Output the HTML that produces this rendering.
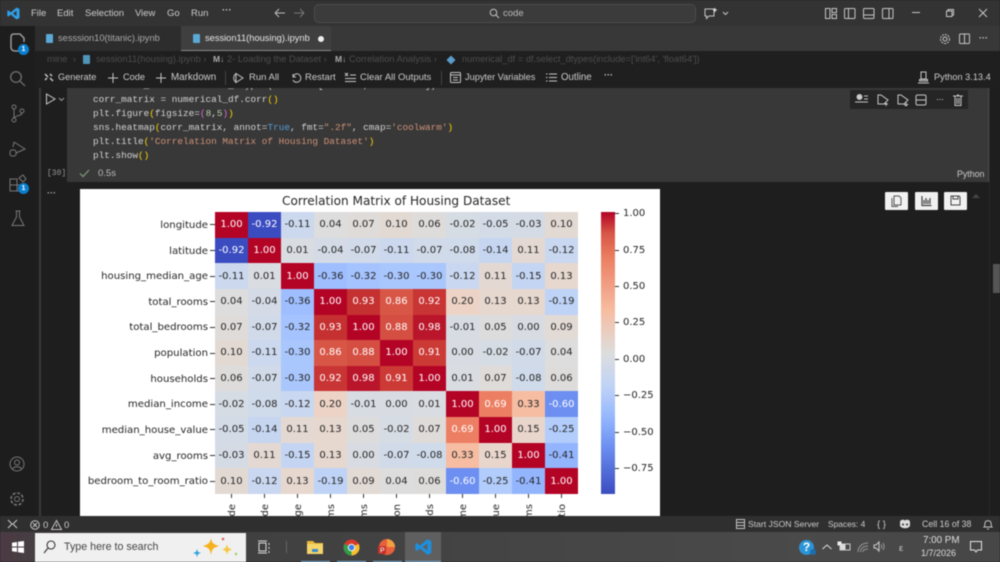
<!DOCTYPE html>
<html><head><meta charset="utf-8"><style>
html,body{margin:0;padding:0;background:#1e1e1e;width:1000px;height:562px;overflow:hidden}
#p{position:relative;width:1000px;height:562px;overflow:hidden;background:#1e1e1e;font-family:"Liberation Sans",sans-serif;color:#ccc;filter:blur(.45px)}
.a{position:absolute}
.t{position:absolute;white-space:nowrap;line-height:1;font-size:9.5px}
svg{position:absolute;overflow:visible}
svg.s *{fill:none;stroke:#c5c5c5;stroke-width:1}
.code{position:absolute;left:93px;font:9.4px/1 "Liberation Mono",monospace;color:#d4d4d4;white-space:pre}
.y{color:#ffd700}.m{color:#da70d6}.u{color:#569cd6}.o{color:#ce9178}.n{color:#b5cea8}
#g{position:absolute;left:135px;top:23px;width:363px;height:282px;display:grid;grid-template-columns:repeat(11,33px);grid-template-rows:repeat(11,1fr);font:10px/1 "DejaVu Sans",sans-serif;color:#262626}
#g i{font-style:normal;display:flex;align-items:center;justify-content:center;padding-top:1px;box-sizing:border-box}
#g i.w{color:#fff}
.yl{position:absolute;right:452px;font:10.15px/1 "DejaVu Sans",sans-serif;color:#262626;white-space:nowrap}
.yt{position:absolute;left:130px;width:5px;height:1px;background:#333}
.xt{position:absolute;top:305px;width:1px;height:4px;background:#333}
.xl{font:10px "DejaVu Sans",sans-serif;fill:#262626}
.ct{position:absolute;left:535px;width:4px;height:1px;background:#333}
.cl{position:absolute;left:543px;font:10px/1 "DejaVu Sans",sans-serif;color:#262626;white-space:nowrap}
.btn{position:absolute;top:192px;width:23px;height:18px;background:#f1f1f1;border-radius:1px}
</style></head><body><div id="p">

<!-- title bar -->
<div class="a" style="left:0;top:0;width:1000px;height:26px;background:#333"></div>
<svg style="left:7px;top:7px" width="13" height="13" viewBox="0 0 13 13"><path d="M9.5 0.5 L12.5 2 V11 L9.5 12.5 L3.8 7.6 L1.3 9.6 L0.3 9 V4 L1.3 3.4 L3.8 5.4 Z M9.5 3.8 L6 6.5 L9.5 9.2 Z" fill="#2f9fe6" fill-rule="evenodd"/></svg>
<div class="t" style="left:31px;top:8.5px;color:#ccc">File</div>
<div class="t" style="left:57px;top:8.5px">Edit</div>
<div class="t" style="left:85px;top:8.5px">Selection</div>
<div class="t" style="left:135px;top:8.5px">View</div>
<div class="t" style="left:167px;top:8.5px">Go</div>
<div class="t" style="left:191px;top:8.5px">Run</div>
<div class="t" style="left:222px;top:6px;font-weight:bold">···</div>
<svg class="s" style="left:274px;top:8px" width="12" height="10"><path d="M1 5H11M1 5L5 1M1 5L5 9" style="stroke:#bbb"/></svg>
<svg class="s" style="left:293px;top:8px" width="12" height="10"><path d="M1 5H11M11 5L7 1M11 5L7 9" style="stroke:#777"/></svg>
<div class="a" style="left:314px;top:4px;width:380px;height:17px;background:#3b3b3b;border:1px solid #4c4c4c;border-radius:5px"></div>
<svg class="s" style="left:489px;top:8px" width="11" height="11"><circle cx="4.5" cy="4.5" r="3.3"/><path d="M7 7L10 10"/></svg>
<div class="t" style="left:503px;top:8.5px;color:#bbb">code</div>
<svg class="s" style="left:704px;top:7px" width="24" height="13"><path d="M1 2H10V9H5L2.5 11.5V9H1Z"/><path d="M11 1V5M9 3H13" style="stroke:#ddd"/><path d="M19 5L21.5 7.5L24 5"/></svg>
<svg class="s" style="left:825px;top:8px" width="12" height="11"><path d="M.5 .5H5V10.5H.5ZM7 .5H11.5V4.5H7ZM7 6.5H11.5V10.5H7Z"/></svg>
<svg class="s" style="left:844px;top:8px" width="12" height="11"><rect x=".5" y=".5" width="10.5" height="10" rx="1"/><path d="M4.5 .5V10.5"/></svg>
<svg class="s" style="left:863px;top:8px" width="12" height="11"><rect x=".5" y=".5" width="10.5" height="10" rx="1"/><path d="M.5 7H11"/></svg>
<svg class="s" style="left:882px;top:8px" width="12" height="11"><rect x=".5" y=".5" width="10.5" height="10" rx="1"/><path d="M7 .5V10.5"/></svg>
<svg class="s" style="left:911px;top:12px" width="10" height="2"><path d="M1 .5H9"/></svg>
<svg class="s" style="left:945px;top:8px" width="10" height="10"><path d="M1.5 3H7V8.5H1.5ZM3 3V1.5H8.5V7H7"/></svg>
<svg class="s" style="left:978px;top:8px" width="10" height="10"><path d="M1 1L9 9M9 1L1 9"/></svg>

<!-- tab bar -->
<div class="a" style="left:35px;top:26px;width:965px;height:25px;background:#383838"></div>
<div class="a" style="left:35px;top:26px;width:146px;height:25px;background:#2d2d2d"></div>
<div class="a" style="left:181px;top:26px;width:150px;height:25px;background:#3f3f3f;border-bottom:1px solid #888;box-sizing:border-box"></div>
<div class="a" style="left:46px;top:34px;width:7px;height:9px;background:#5aa9d6;border-radius:1px"></div>
<div class="t" style="left:58px;top:34px;color:#aaa;font-size:9.3px">sesssion10(titanic).ipynb</div>
<div class="a" style="left:193px;top:34px;width:7px;height:9px;background:#5aa9d6;border-radius:1px"></div>
<div class="t" style="left:205px;top:34px;color:#e6e6e6;font-size:9.3px">session11(housing).ipynb</div>
<div class="a" style="left:318px;top:36px;width:6px;height:6px;background:#eee;border-radius:50%"></div>
<svg class="s" style="left:939px;top:33px" width="12" height="12"><circle cx="6" cy="6" r="2"/><circle cx="6" cy="6" r="4.5" stroke-dasharray="2 1"/></svg>
<svg class="s" style="left:959px;top:33px" width="12" height="12"><rect x=".5" y="1" width="10" height="9.5" rx="1"/><path d="M5.5 1V10.5"/></svg>
<div class="t" style="left:979px;top:34px;font-weight:bold;font-size:9px">···</div>

<!-- activity bar -->
<div class="a" style="left:0;top:26px;width:35px;height:490px;background:#1d1d1d"></div>
<svg class="s" style="left:9px;top:33px" width="18" height="20"><path d="M5 1H11L15 5V9M5 1C2 1 2 3 2 5V14C2 17 4 18 6 18H10" style="stroke-width:1.3;stroke:#aaa"/></svg>
<div class="a" style="left:18px;top:44px;width:11px;height:11px;background:#0a7fd0;border-radius:50%;color:#fff;font-size:7px;line-height:11px;text-align:center;font-weight:bold">1</div>
<svg class="s" style="left:9px;top:70px" width="17" height="17"><circle cx="7" cy="7" r="5.3" style="stroke:#777;stroke-width:1.2"/><path d="M11 11L16 16" style="stroke:#777;stroke-width:1.2"/></svg>
<svg class="s" style="left:10px;top:104px" width="15" height="19"><circle cx="4" cy="3" r="2" style="stroke:#777"/><circle cx="4" cy="16" r="2" style="stroke:#777"/><circle cx="12" cy="7" r="2" style="stroke:#777"/><path d="M4 5V14M12 9C12 12 6 11 4 14" style="stroke:#777"/></svg>
<svg class="s" style="left:8px;top:140px" width="18" height="18"><path d="M6 2L17 9L8 13M6 2L5 7" style="stroke:#777"/><rect x="2" y="10" width="6" height="6" rx="2" style="stroke:#777"/></svg>
<svg class="s" style="left:9px;top:175px" width="18" height="18"><path d="M1 4H8V16H1ZM1 10H14V16H8" style="stroke:#777"/><path d="M10 3L14 0L17 4L14 7Z" style="stroke:#777"/></svg>
<div class="a" style="left:18px;top:183px;width:11px;height:11px;background:#0a7fd0;border-radius:50%;color:#fff;font-size:7px;line-height:11px;text-align:center;font-weight:bold">1</div>
<svg class="s" style="left:11px;top:210px" width="14" height="17"><path d="M4.5 1H9.5M5.5 1V7L1 15.5H13L8.5 7V1" style="stroke:#777"/></svg>
<svg class="s" style="left:9px;top:456px" width="17" height="17"><circle cx="8" cy="8" r="7" style="stroke:#777"/><circle cx="8" cy="6.5" r="2.5" style="stroke:#777"/><path d="M3.5 13C5 10 11 10 12.5 13" style="stroke:#777"/></svg>
<svg class="s" style="left:9px;top:491px" width="17" height="17"><circle cx="8" cy="8" r="2.5" style="stroke:#777"/><circle cx="8" cy="8" r="6" stroke-dasharray="3 1.7" style="stroke:#777;stroke-width:1.6"/></svg>

<!-- notebook area -->
<div class="a" style="left:39px;top:88px;width:2px;height:428px;background:#3a3a3a"></div>
<div class="a" style="left:67px;top:88px;width:921px;height:94px;background:#383838"></div>
<div class="a" style="left:988px;top:88px;width:1px;height:94px;background:#4a4a4a"></div>
<div class="code" style="top:81px"><span style="color:#ccc">numerical_df = df.select_dtypes(include=['int64', 'float64'])</span></div>
<div class="code" style="top:95px">corr_matrix = numerical_df.corr<span class="y">()</span></div>
<div class="code" style="top:109px">plt.figure<span class="y">(</span>figsize=<span class="m">(</span><span class="n">8</span>,<span class="n">5</span><span class="m">)</span><span class="y">)</span></div>
<div class="code" style="top:123px">sns.heatmap<span class="y">(</span>corr_matrix, annot=<span class="u">True</span>, fmt=<span class="o">".2f"</span>, cmap=<span class="o">'coolwarm'</span><span class="y">)</span></div>
<div class="code" style="top:137px">plt.title<span class="y">(</span><span class="o">'Correlation Matrix of Housing Dataset'</span><span class="y">)</span></div>
<div class="code" style="top:151px">plt.show<span class="y">()</span></div>
<svg class="s" style="left:45px;top:93px" width="20" height="12"><path d="M1.5 1L10 6L1.5 11Z" style="stroke:#ccc"/><path d="M14 5L16.5 7.5L19 5" style="stroke:#999"/></svg>
<div class="t" style="left:47px;top:170px;font:8px/1 'Liberation Mono',monospace;color:#999">[30]</div>
<svg class="s" style="left:79px;top:169px" width="11" height="9"><path d="M1 4.5L4 7.5L10 1" style="stroke:#7f9f7f;stroke-width:1.2"/></svg>
<div class="t" style="left:98px;top:169px;font-size:9.5px;color:#bbb">0.5s</div>
<div class="t" style="left:957px;top:169.5px;font-size:8.8px;color:#ccc">Python</div>
<div class="t" style="left:47px;top:189px;font-size:9px;font-weight:bold;color:#aaa">···</div>

<!-- cell toolbar -->
<div class="a" style="left:850px;top:90px;width:118px;height:19px;background:#252525"></div>
<svg class="s" style="left:854px;top:93px" width="112" height="14"><circle cx="5.5" cy="4" r="2.5" style="fill:#ccc"/><path d="M10 3H14M10 6H14M1 9H14"/><path d="M24 2L24 11H30L34 7L27 2ZM32 9V13M30 11H34"/><path d="M44 2L44 11H50L54 7L47 2ZM52 9V13M52 13L50 11M52 13L54 11"/><rect x="62" y="2" width="10" height="10" rx="1.5"/><path d="M62 7H72"/><path d="M83 6.5H84M85.5 6.5H86.5M88 6.5H89"/><path d="M99 3H109M101 3V12.5H107V3M103 2H105M103 5V11M105 5V11"/></svg>

<!-- breadcrumb -->
<div class="a" style="left:35px;top:51px;width:965px;height:18px;background:#1f1f1f"></div>
<div class="t" style="left:47px;top:55px;color:#4d4d4d;font-size:9.5px;white-space:pre">mine  ›</div>
<div class="a" style="left:83px;top:55px;width:7px;height:9px;background:#5aa9d6;border-radius:1px;opacity:.85"></div>
<div class="t" style="left:96px;top:55px;color:#4d4d4d;font-size:9.3px">session11(housing).ipynb  ›</div>
<div class="t" style="left:213px;top:55px;color:#aaa;font-size:8.5px;font-weight:bold">M↓</div>
<div class="t" style="left:227px;top:55px;color:#4d4d4d;font-size:9.3px">2- Loading the Dataset  ›</div>
<div class="t" style="left:335px;top:55px;color:#aaa;font-size:8.5px;font-weight:bold">M↓</div>
<div class="t" style="left:349px;top:55px;color:#4d4d4d;font-size:9.3px">Correlation Analysis  ›</div>
<div class="a" style="left:447px;top:56px;width:8px;height:8px;background:#5a9ccc;transform:rotate(45deg) scale(.8)"></div>
<div class="t" style="left:462px;top:55px;color:#4d4d4d;font-size:9.3px">numerical_df = df.select_dtypes(include=['int64', 'float64'])</div>

<!-- notebook toolbar -->
<div class="a" style="left:35px;top:69px;width:965px;height:19px;background:#1f1f1f"></div>
<svg class="s" style="left:44px;top:73px" width="10" height="10"><path d="M1 1L4 4M6 5L9 8M1 7L3 5M6 1L8 3" style="stroke:#ccc;stroke-width:1.4"/></svg>
<div class="t" style="left:58px;top:72.5px;font-size:9.2px">Generate</div>
<svg class="s" style="left:108px;top:73px" width="10" height="10"><path d="M5 0V10M0 5H10"/></svg>
<div class="t" style="left:123px;top:72.5px;font-size:9.2px">Code</div>
<svg class="s" style="left:156px;top:73px" width="10" height="10"><path d="M5 0V10M0 5H10"/></svg>
<div class="t" style="left:171px;top:72.5px;font-size:9.8px">Markdown</div>
<div class="a" style="left:225px;top:71px;width:1px;height:14px;background:#444"></div>
<svg class="s" style="left:233px;top:72px" width="11" height="12"><path d="M3 1.5L10 6L3 10.5ZM3 1.5C0 4 0 8 3 10.5"/></svg>
<div class="t" style="left:249px;top:72.5px">Run All</div>
<svg class="s" style="left:291px;top:72px" width="11" height="11"><path d="M2 2V5H5M2 5C3 2 6 1 8 2.5C11 5 10 9 7 10C5 10.500 3 10 2 8"/></svg>
<div class="t" style="left:305px;top:72.5px">Restart</div>
<svg class="s" style="left:345px;top:72px" width="11" height="11"><path d="M0 1L3 4M3 1L0 4M5 3H11M0 6.500H11M0 9.500H11"/></svg>
<div class="t" style="left:360px;top:72.5px">Clear All Outputs</div>
<div class="a" style="left:441px;top:71px;width:1px;height:14px;background:#444"></div>
<svg class="s" style="left:450px;top:72px" width="11" height="11"><rect x=".5" y=".5" width="10" height="10" rx="1"/><path d="M.5 3H10.500M3 5.500H8M3 8H8"/></svg>
<div class="t" style="left:465px;top:72.5px;font-size:9.2px">Jupyter Variables</div>
<svg class="s" style="left:546px;top:73px" width="11" height="9"><path d="M0 1H1.500M3 1H11M0 4.500H1.500M3 4.500H11M0 8H1.500M3 8H11"/></svg>
<div class="t" style="left:561px;top:72.5px;font-size:9.7px">Outline</div>
<div class="t" style="left:604px;top:71px;font-weight:bold;font-size:9px">···</div>
<svg class="s" style="left:918px;top:71px" width="11" height="13"><path d="M3 1H8V8H3ZM1.500 10H9.500V8.500H1.500ZM0 12H11"/></svg>
<div class="t" style="left:934px;top:72.5px;font-size:9.2px">Python 3.13.4</div>

<!-- output buttons -->
<div class="btn" style="left:885px"></div><div class="btn" style="left:915px"></div><div class="btn" style="left:944px"></div>
<svg style="left:891px;top:195px" width="11" height="12"><path d="M3 1H8L10 3V10H3ZM1 3V11.500H7" fill="none" stroke="#555"/></svg>
<svg style="left:921px;top:195px" width="11" height="12"><path d="M1 1V10.500H10.500M3 9V5M5 9V3M7 9V5M9 9V3" fill="none" stroke="#444" stroke-width="1.200"/></svg>
<svg style="left:950px;top:195px" width="11" height="12"><path d="M1 1H9L10 2V10H1ZM3 1V4H8V1" fill="none" stroke="#444"/></svg>
<svg style="left:971px;top:193px" width="10" height="6"><path d="M1 5L5 1L9 5Z" fill="#444"/></svg>
<div class="a" style="left:993px;top:264px;width:7px;height:29px;background:#555"></div>
<div class="a" style="left:989px;top:88px;width:1px;height:428px;background:#2a2a2a"></div>

<!-- figure -->
<div class="a" style="left:80px;top:189px;width:580px;height:327px;background:#fff;overflow:hidden">
<div class="a" style="left:202px;top:6px;font:12.1px/1.1 'DejaVu Sans',sans-serif;color:#262626;white-space:nowrap">Correlation Matrix of Housing Dataset</div>
<div id="g">
<i class="w" style="background:#b40426">1.00</i><i class="w" style="background:#3b4cc0">-0.92</i><i style="background:#cbd8ee">-0.11</i><i style="background:#dddddd">0.04</i><i style="background:#dfdbd9">0.07</i><i style="background:#e3d9d3">0.10</i><i style="background:#dedcdb">0.06</i><i style="background:#d6dce4">-0.02</i><i style="background:#d3dbe7">-0.05</i><i style="background:#d5dbe5">-0.03</i><i style="background:#e3d9d3">0.10</i>
<i class="w" style="background:#3b4cc0">-0.92</i><i class="w" style="background:#b40426">1.00</i><i style="background:#d9dce1">0.01</i><i style="background:#d4dbe6">-0.04</i><i style="background:#d1dae9">-0.07</i><i style="background:#cbd8ee">-0.11</i><i style="background:#d1dae9">-0.07</i><i style="background:#cfdaea">-0.08</i><i style="background:#c6d6f1">-0.14</i><i style="background:#e4d9d2">0.11</i><i style="background:#c9d7f0">-0.12</i>
<i style="background:#cbd8ee">-0.11</i><i style="background:#d9dce1">0.01</i><i class="w" style="background:#b40426">1.00</i><i style="background:#9ebeff">-0.36</i><i style="background:#a5c3fe">-0.32</i><i style="background:#a9c6fd">-0.30</i><i style="background:#a9c6fd">-0.30</i><i style="background:#c9d7f0">-0.12</i><i style="background:#e4d9d2">0.11</i><i style="background:#c4d5f3">-0.15</i><i style="background:#e6d7cf">0.13</i>
<i style="background:#dddddd">0.04</i><i style="background:#d4dbe6">-0.04</i><i style="background:#9ebeff">-0.36</i><i class="w" style="background:#b40426">1.00</i><i class="w" style="background:#c53030">0.93</i><i class="w" style="background:#d85646">0.86</i><i class="w" style="background:#c93434">0.92</i><i style="background:#ecd3c5">0.20</i><i style="background:#e6d7cf">0.13</i><i style="background:#e6d7cf">0.13</i><i style="background:#bfd3f6">-0.19</i>
<i style="background:#dfdbd9">0.07</i><i style="background:#d1dae9">-0.07</i><i style="background:#a5c3fe">-0.32</i><i class="w" style="background:#c53030">0.93</i><i class="w" style="background:#b40426">1.00</i><i class="w" style="background:#d44e41">0.88</i><i class="w" style="background:#ba162b">0.98</i><i style="background:#d7dce3">-0.01</i><i style="background:#dddcdc">0.05</i><i style="background:#d8dce2">0.00</i><i style="background:#e2dad5">0.09</i>
<i style="background:#e3d9d3">0.10</i><i style="background:#cbd8ee">-0.11</i><i style="background:#a9c6fd">-0.30</i><i class="w" style="background:#d85646">0.86</i><i class="w" style="background:#d44e41">0.88</i><i class="w" style="background:#b40426">1.00</i><i class="w" style="background:#cc3a36">0.91</i><i style="background:#d8dce2">0.00</i><i style="background:#d6dce4">-0.02</i><i style="background:#d1dae9">-0.07</i><i style="background:#dddddd">0.04</i>
<i style="background:#dedcdb">0.06</i><i style="background:#d1dae9">-0.07</i><i style="background:#a9c6fd">-0.30</i><i class="w" style="background:#c93434">0.92</i><i class="w" style="background:#ba162b">0.98</i><i class="w" style="background:#cc3a36">0.91</i><i class="w" style="background:#b40426">1.00</i><i style="background:#d9dce1">0.01</i><i style="background:#dfdbd9">0.07</i><i style="background:#cfdaea">-0.08</i><i style="background:#dedcdb">0.06</i>
<i style="background:#d6dce4">-0.02</i><i style="background:#cfdaea">-0.08</i><i style="background:#c9d7f0">-0.12</i><i style="background:#ecd3c5">0.20</i><i style="background:#d7dce3">-0.01</i><i style="background:#d8dce2">0.00</i><i style="background:#d9dce1">0.01</i><i class="w" style="background:#b40426">1.00</i><i class="w" style="background:#ec7f63">0.69</i><i style="background:#f6bda2">0.33</i><i class="w" style="background:#6c8ff1">-0.60</i>
<i style="background:#d3dbe7">-0.05</i><i style="background:#c6d6f1">-0.14</i><i style="background:#e4d9d2">0.11</i><i style="background:#e6d7cf">0.13</i><i style="background:#dddcdc">0.05</i><i style="background:#d6dce4">-0.02</i><i style="background:#dfdbd9">0.07</i><i class="w" style="background:#ec7f63">0.69</i><i class="w" style="background:#b40426">1.00</i><i style="background:#e8d6cc">0.15</i><i style="background:#b2ccfb">-0.25</i>
<i style="background:#d5dbe5">-0.03</i><i style="background:#e4d9d2">0.11</i><i style="background:#c4d5f3">-0.15</i><i style="background:#e6d7cf">0.13</i><i style="background:#d8dce2">0.00</i><i style="background:#d1dae9">-0.07</i><i style="background:#cfdaea">-0.08</i><i style="background:#f6bda2">0.33</i><i style="background:#e8d6cc">0.15</i><i class="w" style="background:#b40426">1.00</i><i style="background:#93b5fe">-0.41</i>
<i style="background:#e3d9d3">0.10</i><i style="background:#c9d7f0">-0.12</i><i style="background:#e6d7cf">0.13</i><i style="background:#bfd3f6">-0.19</i><i style="background:#e2dad5">0.09</i><i style="background:#dddddd">0.04</i><i style="background:#dedcdb">0.06</i><i class="w" style="background:#6c8ff1">-0.60</i><i style="background:#b2ccfb">-0.25</i><i style="background:#93b5fe">-0.41</i><i class="w" style="background:#b40426">1.00</i>
</div>
<div class="yl" style="top:32px">longitude</div><div class="yt" style="top:35px"></div>
<div class="yl" style="top:58px">latitude</div><div class="yt" style="top:61px"></div>
<div class="yl" style="top:83px">housing_median_age</div><div class="yt" style="top:87px"></div>
<div class="yl" style="top:109px">total_rooms</div><div class="yt" style="top:112px"></div>
<div class="yl" style="top:134px">total_bedrooms</div><div class="yt" style="top:138px"></div>
<div class="yl" style="top:160px">population</div><div class="yt" style="top:164px"></div>
<div class="yl" style="top:186px">households</div><div class="yt" style="top:189px"></div>
<div class="yl" style="top:211px">median_income</div><div class="yt" style="top:215px"></div>
<div class="yl" style="top:237px">median_house_value</div><div class="yt" style="top:240px"></div>
<div class="yl" style="top:263px">avg_rooms</div><div class="yt" style="top:266px"></div>
<div class="yl" style="top:288px">bedroom_to_room_ratio</div><div class="yt" style="top:292px"></div>
<div class="xt" style="left:151px"></div><div class="xt" style="left:184px"></div><div class="xt" style="left:217px"></div><div class="xt" style="left:250px"></div><div class="xt" style="left:283px"></div><div class="xt" style="left:316px"></div><div class="xt" style="left:349px"></div><div class="xt" style="left:382px"></div><div class="xt" style="left:415px"></div><div class="xt" style="left:448px"></div><div class="xt" style="left:481px"></div>
<svg style="left:0;top:0" width="580" height="327">
<text class="xl" text-anchor="end" transform="translate(155,315) rotate(-90)">de</text>
<text class="xl" text-anchor="end" transform="translate(188,315) rotate(-90)">de</text>
<text class="xl" text-anchor="end" transform="translate(221,315) rotate(-90)">ge</text>
<text class="xl" text-anchor="end" transform="translate(254,315) rotate(-90)">ms</text>
<text class="xl" text-anchor="end" transform="translate(287,315) rotate(-90)">ms</text>
<text class="xl" text-anchor="end" transform="translate(320,315) rotate(-90)">on</text>
<text class="xl" text-anchor="end" transform="translate(353,315) rotate(-90)">ds</text>
<text class="xl" text-anchor="end" transform="translate(386,315) rotate(-90)">me</text>
<text class="xl" text-anchor="end" transform="translate(419,315) rotate(-90)">ue</text>
<text class="xl" text-anchor="end" transform="translate(452,315) rotate(-90)">ms</text>
<text class="xl" text-anchor="end" transform="translate(485,315) rotate(-90)">tio</text>
</svg>
<div class="a" style="left:521px;top:23px;width:14px;height:282px;background:linear-gradient(to bottom,#b40426 0%,#d85646 7.6%,#ec7f63 16.4%,#f6bda2 35%,#dddddd 50%,#d8dce2 52.1%,#bfd3f6 62%,#93b5fe 73.4%,#6c8ff1 83.2%,#3b4cc0 100%)"></div>
<div class="ct" style="top:24px"></div><div class="cl" style="top:20px">1.00</div>
<div class="ct" style="top:61px"></div><div class="cl" style="top:57px">0.75</div>
<div class="ct" style="top:97px"></div><div class="cl" style="top:93px">0.50</div>
<div class="ct" style="top:133px"></div><div class="cl" style="top:129px">0.25</div>
<div class="ct" style="top:170px"></div><div class="cl" style="top:166px">0.00</div>
<div class="ct" style="top:206px"></div><div class="cl" style="top:202px">−0.25</div>
<div class="ct" style="top:243px"></div><div class="cl" style="top:239px">−0.50</div>
<div class="ct" style="top:279px"></div><div class="cl" style="top:275px">−0.75</div>
</div>

<!-- status bar -->
<div class="a" style="left:0;top:516px;width:1000px;height:16px;background:#2f2f2f"></div>
<svg class="s" style="left:7px;top:519px" width="11" height="10"><path d="M1 9L5 5L1 1M10 1L6 5L10 9" style="stroke:#ccc"/></svg>
<svg class="s" style="left:30px;top:520px" width="10" height="10"><circle cx="5" cy="5" r="4.300"/><path d="M3 3L7 7M7 3L3 7"/></svg>
<div class="t" style="left:43px;top:520.500px;font-size:9.500px">0</div>
<svg class="s" style="left:51px;top:520px" width="11" height="10"><path d="M5.500 .5L10.500 9.500H.5Z"/><path d="M5.500 4V7"/></svg>
<div class="t" style="left:64px;top:520.500px;font-size:9.500px">0</div>
<svg class="s" style="left:736px;top:519px" width="9" height="10"><rect x=".5" y=".5" width="8" height="9"/><path d="M.5 3.500H8.500M.5 6.500H8.500"/></svg>
<div class="t" style="left:748px;top:520px;font-size:8.6px">Start JSON Server</div>
<div class="t" style="left:828px;top:520px;font-size:8.4px">Spaces: 4</div>
<div class="t" style="left:877px;top:520px;font-size:9.500px;white-space:pre">{ }</div>
<svg style="left:899px;top:519px" width="12" height="10"><path d="M1 3C1 1 4 0 6 1.500C8 0 11 1 11 3V7C9 10 3 10 1 7Z" fill="#ddd"/><circle cx="4" cy="5.500" r="1" fill="#2f2f2f"/><circle cx="8" cy="5.500" r="1" fill="#2f2f2f"/></svg>
<div class="t" style="left:922px;top:520px;font-size:8.8px">Cell 16 of 38</div>
<svg class="s" style="left:983px;top:519px" width="10" height="11"><path d="M1 8C2 7 2 6 2 4C2 1 8 1 8 4C8 6 8 7 9 8ZM4 10H6"/></svg>

<!-- taskbar -->
<div class="a" style="left:0;top:532px;width:1000px;height:30px;background:linear-gradient(90deg,#4c3a44 0,#443f42 40px,#414141 300px,#4a4a4a 800px,#474747 1000px)"></div>
<svg style="left:12px;top:541px" width="12" height="12"><path d="M0 1.700L5 1V5.500H0ZM6 .8L12 0V5.500H6ZM0 6.500H5V11L0 10.300ZM6 6.500H12V12L6 11.200Z" fill="#fff"/></svg>
<div class="a" style="left:35px;top:533px;width:211px;height:29px;background:#f0f0f0"></div>
<svg style="left:43px;top:540px" width="13" height="14"><circle cx="8" cy="5" r="4" fill="none" stroke="#333" stroke-width="1.100"/><path d="M5 8L1 13" stroke="#333" stroke-width="1.100"/></svg>
<div class="t" style="left:64px;top:542px;font-size:10.700px;color:#444">Type here to search</div>
<svg style="left:192px;top:535px" width="48" height="24"><path d="M19 3C20 8 21 9 27 11C21 13 20 14 19 20C18 14 17 13 11 11C17 9 18 8 19 3Z" fill="#f5b21e"/><path d="M35 9C36 13 36 13 40 14.500C36 16 36 16 35 20C34 16 34 16 30 14.500C34 13 34 13 35 9Z" fill="#f5c842"/><path d="M5 14L6 17L9 18L6 19L5 22L4 19L1 18L4 17Z" fill="#2a9fd8"/><circle cx="31" cy="4" r="1.300" fill="#e0605a"/><circle cx="44" cy="19" r="1.200" fill="#9ccc5a"/></svg>
<svg class="s" style="left:257px;top:540px" width="14" height="14"><rect x="2" y="3" width="7" height="8" style="stroke:#ddd"/><path d="M1 1H10M1 13H10M12 3V5M12 7V9M12 11V13" style="stroke:#ddd"/></svg>
<div class="a" style="left:286px;top:541px;width:1px;height:12px;background:#666"></div>
<div class="a" style="left:405px;top:532px;width:36px;height:30px;background:#5f5f5f"></div>
<svg style="left:307px;top:540px" width="16" height="15"><path d="M0 1H6L8 3H16V5H0Z" fill="#e8b93a"/><rect x="0" y="4" width="16" height="10" fill="#f5d56a"/><rect x="5" y="9" width="6" height="3" fill="#3a8ad0"/></svg>
<svg style="left:343px;top:539px" width="17" height="17" viewBox="0 0 18 18"><circle cx="9" cy="9" r="8.500" fill="#d8392c"/><path d="M9 9L16.500 5A8.500 8.500 0 0 1 9 17.500Z" fill="#f5c02c"/><path d="M9 9L9 17.500A8.500 8.500 0 0 1 1.600 5Z" fill="#2f9e49"/><circle cx="9" cy="9" r="4" fill="#fff"/><circle cx="9" cy="9" r="3" fill="#3f80e8"/></svg>
<svg style="left:378px;top:539px" width="17" height="17"><circle cx="9" cy="8" r="8" fill="#e8613c"/><path d="M9 0A8 8 0 0 1 17 8H9Z" fill="#f0a040"/><rect x="0" y="7" width="8" height="8" rx="1" fill="#c4322c"/><text x="2" y="13.500" font-size="7" font-family="Liberation Sans" fill="#fff">P</text></svg>
<svg style="left:415px;top:538px" width="17" height="18" viewBox="0 0 13 13"><path d="M9.500 0.500 L12.500 2 V11 L9.500 12.500 L3.800 7.600 L1.300 9.600 L0.300 9 V4 L1.300 3.400 L3.800 5.400 Z M9.500 3.800 L6 6.500 L9.500 9.200 Z" fill="#1d8fdc" fill-rule="evenodd"/></svg>
<div class="a" style="left:301px;top:561px;width:29px;height:1px;background:#88bde6"></div>
<div class="a" style="left:337px;top:561px;width:29px;height:1px;background:#88bde6"></div>
<div class="a" style="left:373px;top:561px;width:29px;height:1px;background:#88bde6"></div>
<div class="a" style="left:405px;top:561px;width:36px;height:1px;background:#88bde6"></div>
<div class="a" style="left:799px;top:540px;width:15px;height:15px;border-radius:50%;background:#2b94d8;color:#fff;font:bold 12px/15px 'Liberation Sans',sans-serif;text-align:center">?</div>
<div class="a" style="left:810px;top:549px;width:6px;height:6px;border-radius:50%;background:#1a6fb0"></div>
<svg class="s" style="left:822px;top:544px" width="10" height="6"><path d="M.5 5L5 1L9.500 5" style="stroke:#ddd"/></svg>
<svg class="s" style="left:838px;top:542px" width="13" height="10"><rect x="2" y="2" width="10" height="6" style="stroke:#ccc"/><rect x="0" y="0" width="3" height="3" style="stroke:#eee;fill:#eee"/><rect x="3" y="3" width="4" height="4" style="fill:#ddd;stroke:#ddd"/></svg>
<svg class="s" style="left:857px;top:542px" width="12" height="11"><path d="M1 10C1 5 5 1 11 1M3.500 10C3.500 7 6 4 11 4M6 10C6 8 8 7 11 7" style="stroke:#999"/></svg>
<svg class="s" style="left:873px;top:541px" width="12" height="11"><path d="M1 4H3L6 1V10L3 7H1Z" style="stroke:#ccc"/><path d="M8 3.500C9 4.500 9 6.500 8 7.500M10 2C11.500 4 11.500 7 10 9" style="stroke:#999"/></svg>
<div class="t" style="left:899px;top:544px;font-size:9.500px;color:#ccc">ε</div>
<div class="t" style="left:923px;top:536px;font-size:9.800px;color:#ddd">7:00 PM</div>
<div class="t" style="left:921px;top:549px;font-size:9px;color:#ddd">1/7/2026</div>
<svg class="s" style="left:970px;top:541px" width="12" height="12"><path d="M.5 .5H11.500V9H7.500L6 11L4.500 9H.5Z" style="stroke:#e6e6e6"/></svg>
</div></body></html>
